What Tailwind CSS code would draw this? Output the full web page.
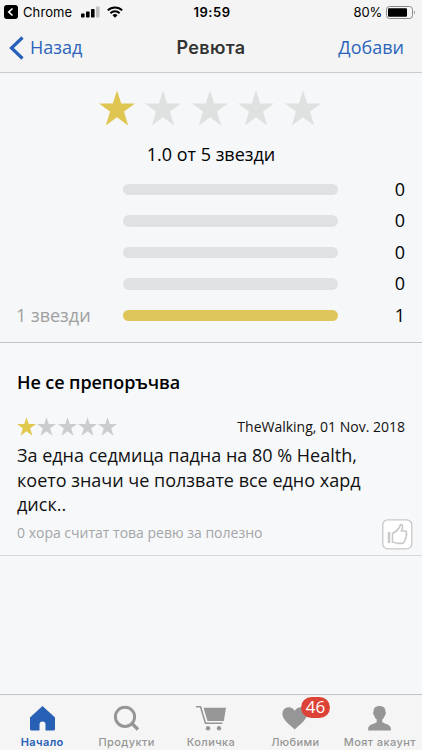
<!DOCTYPE html>
<html lang="bg">
<head>
<meta charset="utf-8">
<title>Ревюта</title>
<script src="https://cdn.jsdelivr.net/npm/@tailwindcss/browser@4"></script>
</head>
<body class="w-[422px] h-[750px] overflow-hidden bg-[#f6f7f9] font-['Open_Sans','Noto_Sans',sans-serif] text-black">
<svg class="hidden">
  <symbol id="star" viewBox="0 0 36 36"><path d="M18 0.500 L22.200 13.400 H36 L25 21.500 L29.200 35.500 L18 27.200 L6.800 35.500 L11 21.500 L0 13.400 H13.800 Z"/></symbol>
</svg>
<div class="flex h-full flex-col">
  <header class="h-[73px] shrink-0 border-b border-[#c9cbcd] bg-[#f4f4f4]">
    <div class="grid h-6 grid-cols-3 items-center font-['Inter',sans-serif] text-[13px] leading-6">
      <div class="flex items-center pl-1">
        <svg class="h-[14px] w-[14px]" viewBox="0 0 14 14"><rect width="14" height="14" rx="3"/><path d="M8.500 3.500 L4.800 7 L8.500 10.500" fill="none" stroke="#fff" stroke-width="1.700"/></svg>
        <span class="ml-[5px] w-[49px] whitespace-nowrap tracking-[0.1px]">Chrome</span>
        <svg class="ml-[9px] h-3 w-[19px]" viewBox="0 0 19 12"><rect y="7.500" width="3.600" height="4" rx=".8"/><rect x="5" y="5.500" width="3.600" height="6" rx=".8"/><rect x="10" y="3" width="3.600" height="8.500" rx=".8"/><rect x="15" y="0.500" width="3.600" height="11" rx=".8" fill="#bfbfbf"/></svg>
        <svg class="ml-[7px] h-[12px] w-[16px]" viewBox="0 0 16 12" fill="none" stroke="#000" stroke-width="2"><path d="M.8 4.400 A10.300 10.300 0 0 1 15.200 4.400"/><path d="M3.400 7.200 A6.500 6.500 0 0 1 12.600 7.200"/><path d="M8 11.800 L5.500 9.200 A3.600 3.600 0 0 1 10.500 9.200 Z" fill="#000" stroke="none"/></svg>
      </div>
      <div class="pl-[2px] text-center font-semibold tracking-[0.5px]">19:59</div>
      <div class="flex items-center justify-end pr-[6px]">
        <span class="mr-[4px] tracking-[-0.2px]">80%</span>
        <svg class="h-[13px] w-[30px]" viewBox="0 0 30 13"><rect x=".5" y=".5" width="26" height="12" rx="3" fill="none" stroke="#8a8a8a"/><rect x="2" y="2.200" width="19" height="8.600" rx="1"/><path d="M28 4.500 Q30 6.500 28 8.500 Z" fill="#8a8a8a"/></svg>
      </div>
    </div>
    <div class="grid h-[47px] grid-cols-3 items-center text-[18px] text-[#2c64bb]">
      <div class="flex items-center pl-[9px]">
        <svg class="h-6 w-[15px]" viewBox="0 0 15 24"><path d="M13.500 1.500 L2.500 12 L13.500 22.500" fill="none" stroke="#2660b8" stroke-width="3.200"/></svg>
        <span class="ml-[6px]">Назад</span>
      </div>
      <h1 class="text-center font-['Inter',sans-serif] text-[18px] font-semibold tracking-[0.3px] text-[#333]">Ревюта</h1>
      <div class="pr-[18px] text-right">Добави</div>
    </div>
  </header>

  <section class="h-[270px] shrink-0 border-b border-[#c3c4c7] bg-[#f5f7f9] pt-[17px]">
    <div class="ml-[98.500px] flex w-[222.500px] justify-between text-[#dfe1e1]">
      <svg class="h-9 w-9 fill-[#dfc652]"><use href="#star"/></svg>
      <svg class="h-9 w-9 fill-current"><use href="#star"/></svg>
      <svg class="h-9 w-9 fill-current"><use href="#star"/></svg>
      <svg class="h-9 w-9 fill-current"><use href="#star"/></svg>
      <svg class="h-9 w-9 fill-current"><use href="#star"/></svg>
    </div>
    <p class="mt-[17px] h-[22px] text-center text-[18px] leading-[22px]">1.0 от 5 звезди</p>
    <div class="mt-[8.500px] text-[18px]">
      <div class="flex h-[31.500px] items-center pr-[17px] pl-4"><span class="w-[107px]"></span><span class="h-[11.500px] w-[215px] rounded-full bg-[#e0e1e3]"></span><span class="ml-auto">0</span></div>
      <div class="flex h-[31.500px] items-center pr-[17px] pl-4"><span class="w-[107px]"></span><span class="h-[11.500px] w-[215px] rounded-full bg-[#e0e1e3]"></span><span class="ml-auto">0</span></div>
      <div class="flex h-[31.500px] items-center pr-[17px] pl-4"><span class="w-[107px]"></span><span class="h-[11.500px] w-[215px] rounded-full bg-[#e0e1e3]"></span><span class="ml-auto">0</span></div>
      <div class="flex h-[31.500px] items-center pr-[17px] pl-4"><span class="w-[107px]"></span><span class="h-[11.500px] w-[215px] rounded-full bg-[#e0e1e3]"></span><span class="ml-auto">0</span></div>
      <div class="flex h-[31.500px] items-center pr-[17px] pl-4"><span class="w-[107px] text-[#a0a0a0]">1 звезди</span><span class="h-[11.500px] w-[215px] rounded-full bg-[#dfc65a]"></span><span class="ml-auto">1</span></div>
    </div>
  </section>

  <article class="h-[213px] shrink-0 border-b border-[#d7d9dc] bg-[#f7f8fa] pt-[27px] pl-[17px]">
    <h2 class="h-6 text-[18px] leading-6 font-semibold tracking-[-0.080px]">Не се препоръчва</h2>
    <div class="mt-[21px] flex h-[22px] items-center justify-between pr-[17px]">
      <div class="flex gap-[1.300px] text-[#cbcccd]">
        <svg class="h-[19px] w-[19px] fill-[#dfc84c]"><use href="#star"/></svg>
        <svg class="h-[19px] w-[19px] fill-current"><use href="#star"/></svg>
        <svg class="h-[19px] w-[19px] fill-current"><use href="#star"/></svg>
        <svg class="h-[19px] w-[19px] fill-current"><use href="#star"/></svg>
        <svg class="h-[19px] w-[19px] fill-current"><use href="#star"/></svg>
      </div>
      <span class="pt-px text-[14px] text-[#111]">TheWalking, 01 Nov. 2018</span>
    </div>
    <p class="mt-[6px] text-[18px] leading-[24.500px] whitespace-nowrap text-[#111]">За една седмица падна на 80 % Health,<br>което значи че ползвате все едно хард<br>диск..</p>
    <div class="flex items-start justify-between pr-[9px]">
      <span class="mt-[6px] text-[14px] leading-5 text-[#a4a5a7]">0 хора считат това ревю за полезно</span>
      <svg class="mt-[2px] h-[31px] w-[31px]" viewBox="0 0 31 31" fill="none" stroke="#c8c8ca"><rect x=".8" y=".8" width="29" height="29" rx="5" fill="#fff" stroke-width="1.300"/><path d="M7 13 V24" stroke-width="2.500"/><path d="M10.500 14.500 Q15 12.500 17 9 L18.500 5.800 Q20.500 5 20.500 7.500 Q20.500 10 19.300 12 H23 Q25 12.200 24.300 14.200 Q25.300 15.500 24 17 Q24.500 18.700 23.200 20 Q23.500 21.500 22.400 22.400 Q22 24.500 20 24.400 H15.500 Q13 23.500 10.500 23.300 Z" stroke-width="1.600" stroke-linejoin="round"/></svg>
    </div>
  </article>

  <nav class="mt-auto grid h-[56px] shrink-0 grid-cols-5 border-t border-[#c3c4c7] bg-[#f5f5f5] pt-[10px] font-['Inter',sans-serif] text-[11px] font-medium text-[#969696]">
    <a class="flex flex-col items-center text-[#2760b5]">
      <svg class="h-[27px] w-[27px] fill-current" viewBox="0 0 27 27"><path d="M13.500 1 L26 12.500 V24 Q26 25.500 24.500 25.500 H16.500 V19.500 Q16.500 16.500 13.500 16.500 Q10.500 16.500 10.500 19.500 V25.500 H2.500 Q1 25.500 1 24 V12.500 Z"/></svg>
      <span class="mt-[2px] leading-4 font-semibold tracking-[0.4px]">Начало</span>
    </a>
    <a class="flex flex-col items-center">
      <svg class="h-[27px] w-[27px]" viewBox="0 0 27 27" fill="none" stroke="currentColor"><circle cx="12" cy="11.800" r="9.600" stroke-width="3"/><path d="M19 18.500 L25 24.500" stroke-width="3.300"/></svg>
      <span class="mt-[2px] leading-4 tracking-[0.4px]">Продукти</span>
    </a>
    <a class="flex flex-col items-center">
      <svg class="h-[27px] w-[32px]" viewBox="0 0 32 27"><path d="M8.500 2.700 H31 L28.800 16 H12.500 Z" fill="currentColor"/><path d="M1 1.800 H5.500 L10.500 18.300 H27.500" fill="none" stroke="currentColor" stroke-width="1.600"/><circle cx="13" cy="23.300" r="2.200" fill="currentColor"/><circle cx="24" cy="23.300" r="2.200" fill="currentColor"/></svg>
      <span class="mt-[2px] leading-4 tracking-[0.4px]">Количка</span>
    </a>
    <a class="relative flex flex-col items-center">
      <svg class="h-[27px] w-[27px] fill-current" viewBox="0 0 27 27"><path d="M12.700 24.500 C8.200 20 .7 15 .4 9.500 C.2 5 3.200 2.200 6.700 2.200 C9.700 2.200 11.900 4 12.700 6 C13.500 4 15.700 2.200 18.700 2.200 C22.200 2.200 25.200 5 25 9.500 C24.700 15 17.200 20 12.700 24.500 Z"/></svg>
      <span class="mt-[2px] leading-4 tracking-[0.4px]">Любими</span>
      <span class="absolute -top-[8px] left-[48px] h-[20.500px] w-[28.500px] rounded-full bg-[#dc4235] text-center font-['Open_Sans','Noto_Sans',sans-serif] text-[17px] leading-[20px] font-normal text-white">46</span>
    </a>
    <a class="flex flex-col items-center">
      <svg class="h-[27px] w-[27px] fill-current" viewBox="0 0 27 27"><path d="M13.500 1 C17.500 1 19.700 3.300 19.400 6.500 C20.400 7 19.800 10 18.800 10.500 C18.400 12.500 17.300 13.500 16.300 14.500 V17.200 C19 19 24.800 19.500 24.800 23.500 V25.500 H2.200 V23.500 C2.200 19.500 8 19 10.700 17.200 V14.500 C9.700 13.500 8.600 12.500 8.200 10.500 C7.200 10 6.600 7 7.600 6.500 C7.300 3.300 9.500 1 13.500 1 Z"/></svg>
      <span class="mt-[2px] leading-4 tracking-[0.4px] whitespace-nowrap">Моят акаунт</span>
    </a>
  </nav>
</div>
</body>
</html>
